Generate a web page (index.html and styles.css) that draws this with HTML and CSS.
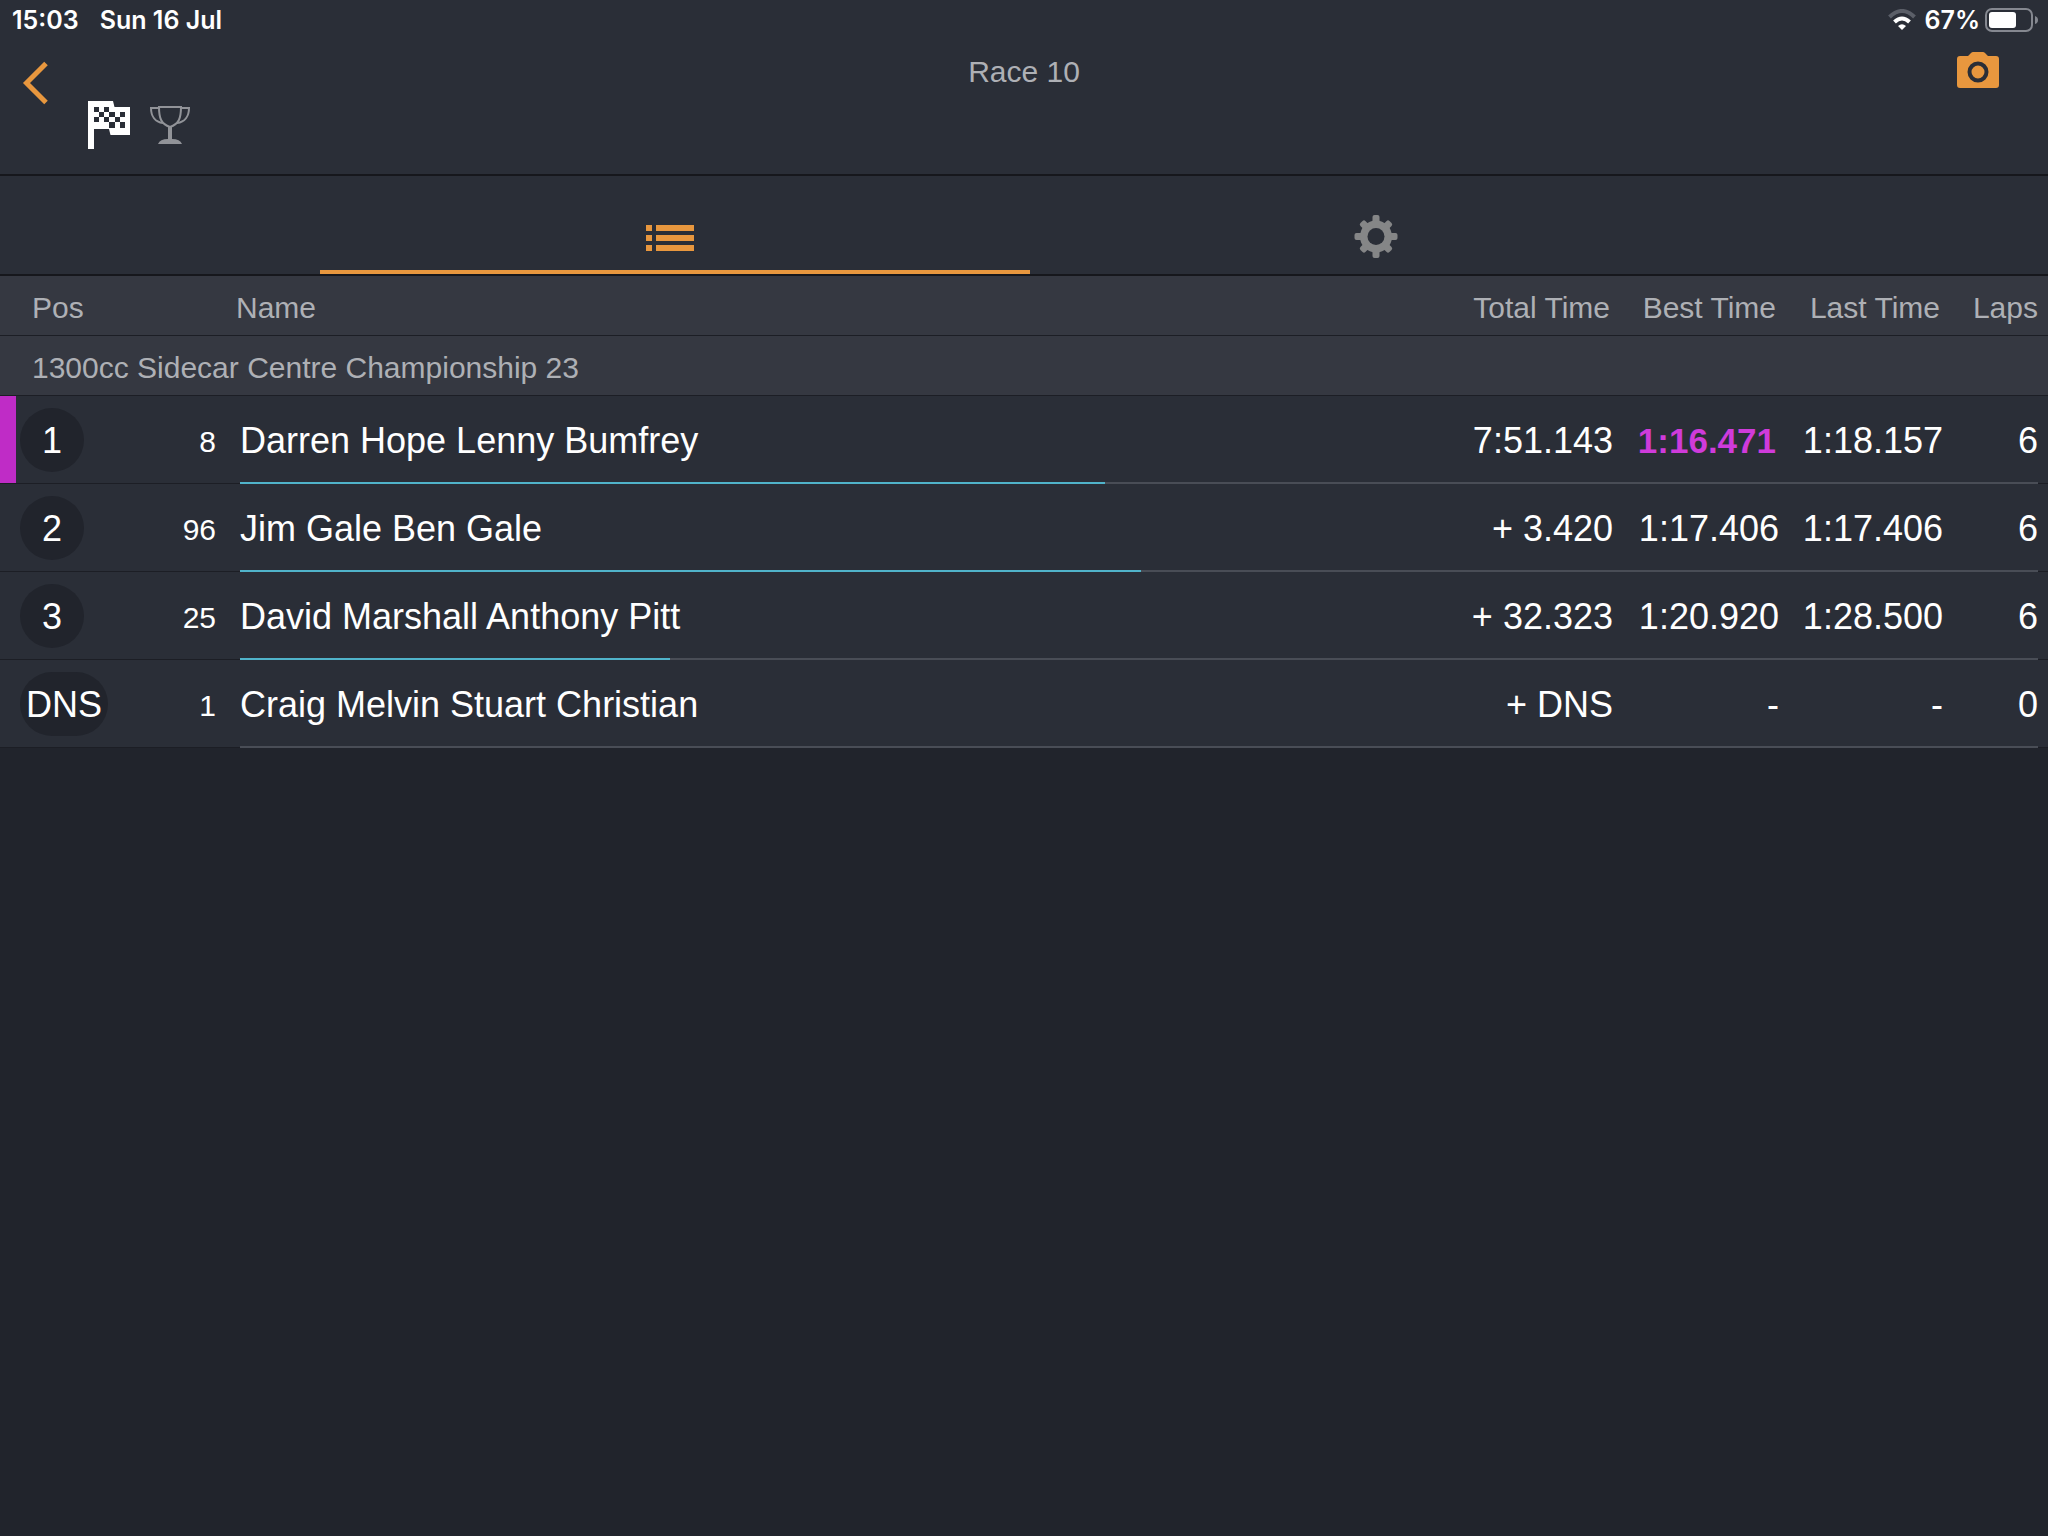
FILE: index.html
```html
<!DOCTYPE html>
<html lang="en">
<head>
    <meta charset="UTF-8">
    <meta name="viewport" content="width=device-width, initial-scale=1.0">
    <title>Race 10</title>
    <link rel="stylesheet" href="styles.css">
</head>
<body>
    <header>
        <div class="status">
            <span class="clock">15:03</span>
            <span class="date">Sun 16 Jul</span>
            <svg class="wifi" width="28" height="22" viewBox="0 0 28 22">
                <path d="M1.500 8Q14-4 26.500 8" fill="none" stroke="#5b5f68" stroke-width="4"/>
                <path d="M6.500 13Q14 6 21.500 13" fill="none" stroke="#fff" stroke-width="4"/>
                <path d="M14 21L10 17Q14 13.500 18 17Z" fill="#fff"/>
            </svg>
            <span class="percent">67%</span>
            <svg class="battery" width="54" height="24" viewBox="0 0 54 24">
                <rect x="1" y="1" width="46" height="22" rx="6" fill="none" stroke="#858890" stroke-width="2"/>
                <rect x="4" y="4" width="27" height="16" rx="3" fill="#fff"/>
                <path d="M50 8Q53 9 53 12T50 16Z" fill="#858890"/>
            </svg>
        </div>
        <div class="navbar">
            <div class="side">
                <button class="back" aria-label="Back">
                    <svg width="28" height="46" viewBox="0 0 28 46">
                        <path d="M24 3.500L4.500 23L24 42.500" fill="none" stroke="#e8973e" stroke-width="5"/>
                    </svg>
                </button>
                <div class="badges">
                    <svg width="42" height="48" viewBox="0 0 42 48">
                        <path d="M0 0H25L26.500 6H42V34H22.500L21 28H6V48H0Z" fill="#fff"/>
                        <path d="M6 6h5v5h-5zM16 6h5v5h-5zM11 11h5v5h-5zM21 11h6v5h-6zM32 11h5v5h-5zM6 16h5v5h-5zM16 16h5v5h-5zM27 16h5v5h-5zM21 21h6v6h-6zM32 21h5v6h-5z" fill="#2a2e37"/>
                    </svg>
                    <svg width="42" height="40" viewBox="0 0 42 40">
                        <g fill="none" stroke="#919398" stroke-width="2">
                            <path d="M10 2H32C32 13 30 19 21 22C12 19 10 13 10 2Z"/>
                            <path d="M10 3H2C2 11 6 17 14 18M32 3H40C40 11 36 17 28 18"/>
                        </g>
                        <path d="M19 22H23V34Q31 34 33 39H9Q11 34 19 34Z" fill="#919398"/>
                    </svg>
                </div>
            </div>
            <h1>Race 10</h1>
            <div class="side right">
                <button class="camera" aria-label="Take photo">
                    <svg width="42" height="36" viewBox="0 0 42 36">
                        <path d="M3 4H11L14 1Q15 0 16 0H26Q27 0 28 1L31 4H39Q42 4 42 7V33Q42 36 39 36H3Q0 36 0 33V7Q0 4 3 4Z" fill="#e8973e"/>
                        <circle cx="21" cy="20" r="8.500" fill="none" stroke="#2a2e37" stroke-width="4"/>
                    </svg>
                </button>
            </div>
        </div>
        <nav>
            <div class="tabs">
                <button class="tab active" aria-label="Results">
                    <svg width="52" height="44" viewBox="0 0 52 44">
                        <path d="M0 11h6v6H0zM10 11h38v6H10zM0 21h6v6H0zM10 21h38v6H10zM0 31h6v6H0zM10 31h38v6H10z" fill="#e8973e"/>
                    </svg>
                </button>
                <button class="tab" aria-label="Settings">
                    <svg width="44" height="44" viewBox="-22 -22.500 44 44" fill="#858687">
                        <g>
                            <rect x="-3.500" y="-21.500" width="7" height="43" rx="2"/>
                            <rect x="-21.500" y="-3.500" width="43" height="7" rx="2"/>
                        </g>
                        <g transform="rotate(45)">
                            <rect x="-3.500" y="-20.500" width="7" height="41" rx="2"/>
                            <rect x="-20.500" y="-3.500" width="41" height="7" rx="2"/>
                        </g>
                        <circle r="16"/>
                        <circle r="8.500" fill="#2a2e37"/>
                    </svg>
                </button>
            </div>
        </nav>
    </header>
    <main>
        <table>
            <colgroup>
                <col class="col-pos">
                <col class="col-number">
                <col>
                <col class="col-total">
                <col class="col-best">
                <col class="col-last">
                <col class="col-laps">
            </colgroup>
            <thead>
                <tr>
                    <th class="pos">Pos</th>
                    <th></th>
                    <th class="name">Name</th>
                    <th>Total Time</th>
                    <th>Best Time</th>
                    <th>Last Time</th>
                    <th>Laps</th>
                </tr>
                <tr>
                    <th class="group" colspan="7">1300cc Sidecar Centre Championship 23</th>
                </tr>
            </thead>
            <tbody>
                <tr class="fastest">
                    <td class="pos"><span class="place">1</span></td>
                    <td class="number">8</td>
                    <td class="name">Darren Hope Lenny Bumfrey
                        <div class="track"><div class="bar" style="width: 48.1%"></div></div>
                    </td>
                    <td>7:51.143</td>
                    <td class="best">1:16.471</td>
                    <td>1:18.157</td>
                    <td>6</td>
                </tr>
                <tr>
                    <td class="pos"><span class="place">2</span></td>
                    <td class="number">96</td>
                    <td class="name">Jim Gale Ben Gale
                        <div class="track"><div class="bar" style="width: 50.1%"></div></div>
                    </td>
                    <td>+ 3.420</td>
                    <td>1:17.406</td>
                    <td>1:17.406</td>
                    <td>6</td>
                </tr>
                <tr>
                    <td class="pos"><span class="place">3</span></td>
                    <td class="number">25</td>
                    <td class="name">David Marshall Anthony Pitt
                        <div class="track"><div class="bar" style="width: 23.9%"></div></div>
                    </td>
                    <td>+ 32.323</td>
                    <td>1:20.920</td>
                    <td>1:28.500</td>
                    <td>6</td>
                </tr>
                <tr>
                    <td class="pos"><span class="place">DNS</span></td>
                    <td class="number">1</td>
                    <td class="name">Craig Melvin Stuart Christian
                        <div class="track"></div>
                    </td>
                    <td>+ DNS</td>
                    <td>-</td>
                    <td>-</td>
                    <td>0</td>
                </tr>
            </tbody>
        </table>
    </main>
</body>
</html>
```

FILE: styles.css
```css
*{
    box-sizing: border-box;
}
body{
    margin: 0;
    background-color: #21242c;
    color: white;
    font-family: "Liberation Sans", Arial, sans-serif;
}
svg{
    display: block;
}
button{
    border: 0;
    padding: 0;
    background: none;
    cursor: pointer;
}
header{
    background-color: #2a2e37;
}

/* status bar */
.status{
    display: flex;
    align-items: center;
    height: 40px;
    padding: 0 9px 0 12px;
    font: 600 25px Inter, sans-serif;
}
.date{
    margin-left: 21px;
}
.wifi{
    margin-left: auto;
}
.percent{
    margin: 0 5px 0 8px;
}

/* title and buttons */
.navbar{
    display: flex;
    align-items: flex-start;
    height: 136px;
    border-bottom: 2px solid #16171c;
}
.side{
    display: flex;
    flex: 1;
}
.right{
    justify-content: flex-end;
}
h1{
    margin: 14px 0 0;
    color: #aeb0b5;
    font-size: 30px;
    font-weight: normal;
    line-height: 36px;
}
.back{
    margin: 20px 0 0 22px;
    align-self: flex-start;
}
.badges{
    display: flex;
    gap: 19px;
    margin: 61px 0 0 38px;
}
.badges svg + svg{
    margin-top: 4px;
}
.camera{
    margin: 12px 49px 0 0;
}

/* tabs */
nav{
    border-bottom: 2px solid #16171c;
}
.tabs{
    display: flex;
    width: 68.75%;
    margin: auto;
}
.tab{
    position: relative;
    display: flex;
    flex: 1;
    justify-content: center;
    height: 98px;
    padding-top: 38px;
}
.active::after{
    content: "";
    position: absolute;
    left: 0;
    right: -6px;
    bottom: 0;
    height: 4px;
    background-color: #e8973e;
}

/* results */
table{
    width: 100%;
    table-layout: fixed;
    border-collapse: separate;
    border-spacing: 0;
}
.col-pos{
    width: 120px;
}
.col-number{
    width: 116px;
}
.col-total{
    width: 200px;
}
.col-best{
    width: 166px;
}
.col-last{
    width: 164px;
}
.col-laps{
    width: 105px;
}
th, td{
    padding: 0;
    text-align: right;
    white-space: nowrap;
    border-bottom: 1px solid #1c1e25;
}
th{
    height: 60px;
    padding: 4px 3px 0 0;
    background-color: #353841;
    color: #aeb0b5;
    font-size: 30px;
    font-weight: normal;
}
td{
    height: 88px;
    padding-top: 3px;
    background-color: #2a2e37;
    font-size: 36px;
}
th:last-child, td:last-child{
    padding-right: 10px;
}
th.pos, th.group{
    padding-left: 32px;
    text-align: left;
}
th.name, td.name{
    text-align: left;
}
td.name{
    padding-left: 4px;
}
td.pos{
    padding: 0 0 0 20px;
    text-align: left;
}
td.number{
    padding-right: 20px;
    padding-top: 4px;
    font-size: 30px;
}
td.best{
    padding-right: 3px;
    color: #cf3bdb;
    font-weight: bold;
    font-size: 35px;
}
.place{
    display: inline-block;
    min-width: 64px;
    height: 64px;
    padding: 1px 6px 0;
    border-radius: 32px;
    background-color: #21242c;
    line-height: 64px;
    text-align: center;
    vertical-align: middle;
}
.fastest .pos{
    background-image: linear-gradient(#bf2cc6, #bf2cc6);
    background-size: 16px 100%;
    background-repeat: no-repeat;
}
tbody tr{
    position: relative;
}
/* lap progress, drawn over the bottom edge of the row */
.track{
    position: absolute;
    left: 240px;
    right: 10px;
    bottom: 0;
    height: 2px;
    background-color: #494d56;
}
.bar{
    height: 2px;
    background-color: #50b3ca;
}
```
